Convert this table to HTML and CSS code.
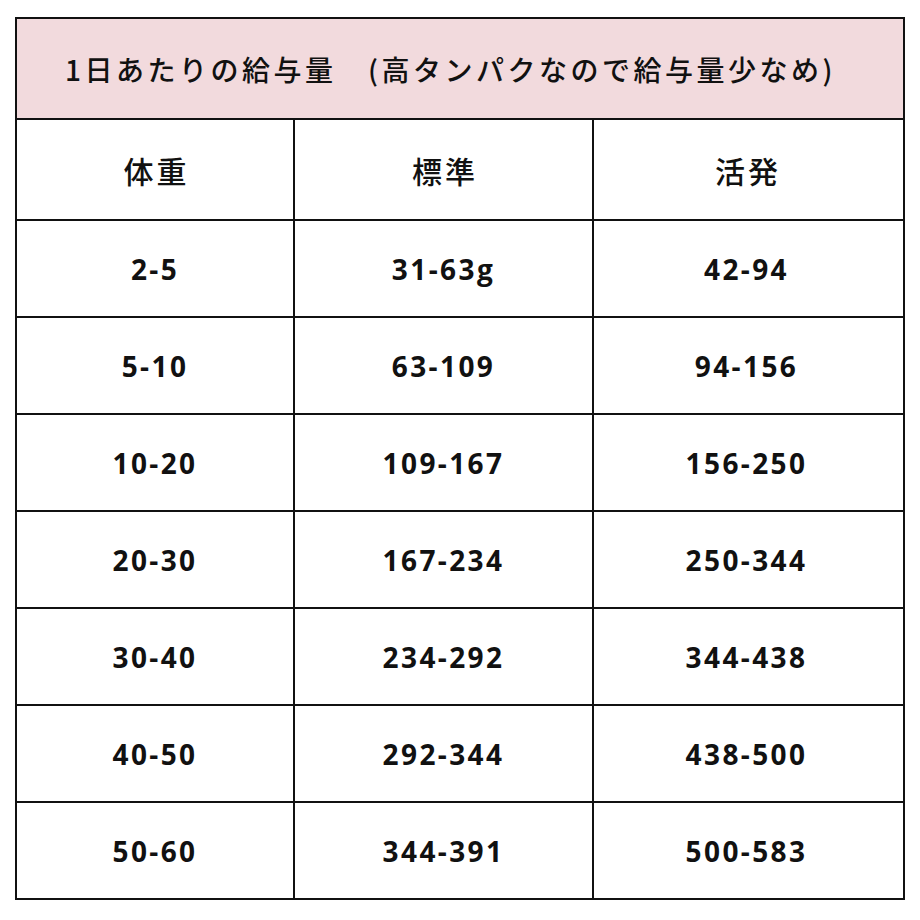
FILE: index.html
```html
<!DOCTYPE html>
<html lang="ja">
<head>
<meta charset="utf-8">
<link rel="stylesheet" href="styles.css">
</head>
<body>
<div class="sheet">
  <div class="title">1日あたりの給与量　(高タンパクなので給与量少なめ)</div>
  <div class="row head">
    <div class="cell">体重</div>
    <div class="cell">標準</div>
    <div class="cell">活発</div>
  </div>
  <div class="row"><div class="cell">2-5</div><div class="cell">31-63g</div><div class="cell">42-94</div></div>
  <div class="row"><div class="cell">5-10</div><div class="cell">63-109</div><div class="cell">94-156</div></div>
  <div class="row"><div class="cell">10-20</div><div class="cell">109-167</div><div class="cell">156-250</div></div>
  <div class="row"><div class="cell">20-30</div><div class="cell">167-234</div><div class="cell">250-344</div></div>
  <div class="row"><div class="cell">30-40</div><div class="cell">234-292</div><div class="cell">344-438</div></div>
  <div class="row"><div class="cell">40-50</div><div class="cell">292-344</div><div class="cell">438-500</div></div>
  <div class="row"><div class="cell">50-60</div><div class="cell">344-391</div><div class="cell">500-583</div></div>
</div>
</body>
</html>
```

FILE: styles.css
```css
html, body {
  margin: 0;
  padding: 0;
  background: #ffffff;
}
body {
  padding: 17px 0 0 15px;
}
.sheet {
  width: 886px;
  border: 2px solid #111111;
  background: #ffffff;
  color: #111111;
}
.title {
  height: 99px;
  background: #f2dadd;
  display: flex;
  align-items: center;
  padding-left: 48px;
  font-family: "Noto Sans CJK JP", sans-serif;
  font-size: 28px;
  font-weight: 500;
  letter-spacing: 3.5px;
}
.row {
  display: grid;
  grid-template-columns: 276px 299px 307px;
  column-gap: 0;
  border-top: 2px solid #111111;
  height: 95px;
}
.row.head {
  height: 99px;
}
.cell {
  display: flex;
  align-items: center;
  justify-content: center;
  font-family: "Open Sans", sans-serif;
  font-weight: 700;
  font-size: 28px;
  letter-spacing: 2.4px;
}
.cell + .cell {
  border-left: 2px solid #111111;
}
.head .cell {
  font-family: "Noto Sans CJK JP", sans-serif;
  font-weight: 500;
  font-size: 30px;
  letter-spacing: 3px;
  padding-left: 3px;
}
```
